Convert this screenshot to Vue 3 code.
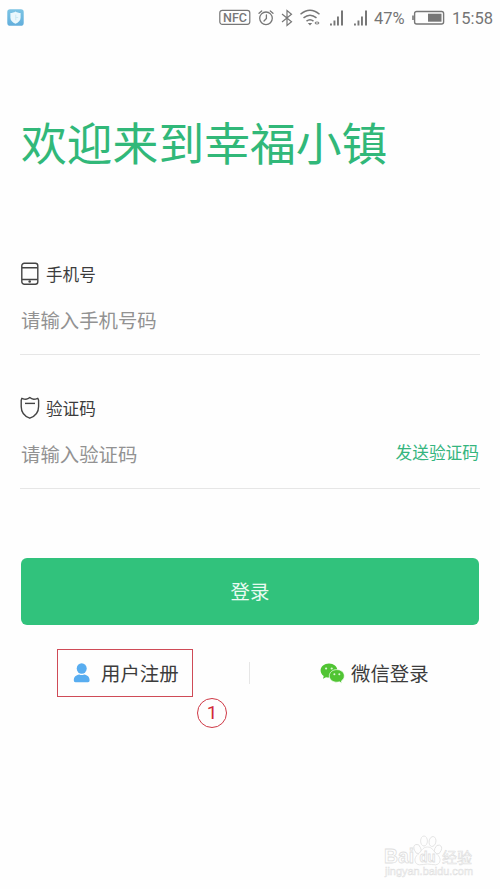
<script setup>
const fields = [
  { id: 'phone', label: '手机号', hint: '请输入手机号码' },
  { id: 'code', label: '验证码', hint: '请输入验证码', action: '发送验证码' },
]
</script>

<template>
  <div class="screen">
    <header class="status">
      <svg class="guard" width="17" height="17" viewBox="0 0 18 18">
        <defs>
          <linearGradient id="guardFill" x1="0" y1="0" x2="0" y2="1">
            <stop offset="0" stop-color="#7cc4e4" />
            <stop offset="1" stop-color="#62aedc" />
          </linearGradient>
        </defs>
        <rect x=".3" y=".3" width="17.4" height="17.4" rx="3" fill="url(#guardFill)" />
        <path d="M9 2.600c1.700 1.100 3.400 1.500 5.400 1.600v5.100c0 3-2.300 5.100-5.400 6.300-3.100-1.200-5.400-3.300-5.400-6.300V4.200c2-.1 3.700-.5 5.400-1.600z" fill="#eaf8fd" />
        <path d="M9.300 6v6M9.300 9h2.500" stroke="#c3e4f1" stroke-width=".8" />
      </svg>
      <div class="indicators">
        <svg width="32" height="17" viewBox="0 0 32 17">
          <rect x=".8" y="1.300" width="30" height="14" rx="2.500" fill="none" stroke="#777" stroke-width="1.200" />
          <text x="4" y="12.700" textLength="24" lengthAdjust="spacingAndGlyphs" class="nfc">NFC</text>
        </svg>
        <svg class="alarm" width="16" height="18" viewBox="0 0 16 18" fill="none" stroke="#777" stroke-width="1.300" stroke-linecap="round">
          <circle cx="8" cy="9.300" r="6.300" />
          <path d="M8.400 5.800V9.500L6 12M1 4.300 3.700 2M15 4.300 12.300 2" />
        </svg>
        <svg class="bluetooth" width="12" height="18" viewBox="0 0 12 18" fill="none" stroke="#777" stroke-width="1.200">
          <path d="M1 5 10.500 12.800 6 16.500V1.500L10.500 5.200 1 13" />
        </svg>
        <svg class="wifi" width="21" height="18" viewBox="0 0 21 18" fill="none" stroke="#777" stroke-width="1.500">
          <path d="M.5 5.300q9.500-8 19 0M3.500 8.900q6.500-5.400 13 0M6.500 12.200q3.500-2.800 7 0" />
          <path d="M7.800 14h4.400L10 16.500z" fill="#777" stroke="none" />
          <path d="M16.500 12v4l-2-2zM17.500 12v4l2-2z" fill="#777" stroke="none" />
        </svg>
        <svg v-for="n in 2" :key="n" class="signal" width="15" height="18" viewBox="0 0 15 18" fill="#777">
          <path d="M0 14.500h1.900v2H0zM3.500 11.500h1.900v5H3.500zM7 7.500h1.900v9H7zM11 1.500h2v15H11z" />
        </svg>
        <span class="percent">47%</span>
        <svg class="battery" width="33" height="16" viewBox="0 0 33 16">
          <rect x="2.600" y="1.500" width="29" height="12.500" rx="2" fill="none" stroke="#777" stroke-width="1.400" />
          <path d="M.2 5.500h1.600v4.500H.2z" fill="#777" />
          <path d="M16 3.700h13.500v8H16z" fill="#777" />
        </svg>
        <span class="time">15:58</span>
      </div>
    </header>

    <main class="content">
      <h1 class="title">欢迎来到幸福小镇</h1>

      <section v-for="field in fields" :key="field.id" class="field">
        <div class="label">
          <svg v-if="field.id === 'phone'" width="20" height="24" viewBox="0 0 20 24" fill="none" stroke="#444" stroke-width="1.400">
            <rect x="1.800" y="1.300" width="16" height="21" rx="2.500" />
            <path d="M2 5.700h15.500M2 17.500h15.500" />
            <circle cx="9.700" cy="19.500" r="1.300" fill="#444" stroke="none" />
          </svg>
          <svg v-else width="20" height="24" viewBox="0 0 20 24" fill="none" stroke="#444" stroke-width="1.400" stroke-linejoin="round">
            <path d="M9.800 1.600C8.400 2.900 7.300 3.200 6 3.200 4.500 3.200 3.200 2.800 1.900 2.300L1.200 4.200V10.500C1.200 16 4.500 20.300 9.800 22.200 15.100 20.300 18.600 16 18.600 10.500V4.200L17.800 2.300C16.500 2.800 15.200 3.200 13.700 3.200 12.400 3.200 11.200 2.900 9.800 1.600z" />
            <path d="M5 7.400h10" />
          </svg>
          <span>{{ field.label }}</span>
        </div>
        <div class="entry">
          <span class="hint">{{ field.hint }}</span>
          <span v-if="field.action" class="send">{{ field.action }}</span>
        </div>
      </section>

      <button class="login" type="button">登录</button>

      <nav class="options">
        <div class="option register">
          <svg width="18" height="20" viewBox="0 0 18 20" fill="#58adf0">
            <ellipse cx="8.700" cy="5.500" rx="5" ry="5.200" />
            <path d="M.8 17.300C.8 13.800 3 12.200 6.200 11.600q2.500 1 5 0c3.200.6 5.400 2.200 5.400 5.700 0 1.300-.6 1.900-1.600 1.900H2.400c-1 0-1.600-.6-1.600-1.900z" />
          </svg>
          <span>用户注册</span>
          <b class="marker">1</b>
        </div>
        <i class="divider"></i>
        <div class="option wechat">
          <svg width="25" height="21" viewBox="0 0 25 21">
            <path d="M9 .6C4.300.6.6 3.700.6 7.600c0 2.200 1.200 4.200 3.100 5.500l-.7 2.700 3-1.600c1 .3 2 .4 3 .4 4.700 0 8.400-3.100 8.400-7S13.700.6 9 .6z" fill="#50c433" />
            <path d="M16.800 6.600c-4.200 0-7.500 2.800-7.500 6.300s3.300 6.300 7.500 6.300c.9 0 1.800-.1 2.600-.4l2.600 1.400-.6-2.300c1.700-1.100 2.900-2.900 2.900-5 0-3.500-3.300-6.300-7.500-6.300z" fill="#50c433" stroke="#fff" stroke-width=".7" />
            <g fill="#dff5d8">
              <circle cx="6.100" cy="5.500" r="1.100" />
              <circle cx="11.700" cy="5.500" r="1.100" />
              <circle cx="14.400" cy="11.300" r="1" />
              <circle cx="19.300" cy="11.300" r="1" />
            </g>
          </svg>
          <span>微信登录</span>
        </div>
      </nav>
    </main>

    <svg class="watermark" width="96" height="50" viewBox="0 0 96 50">
      <g fill="#fefefe" stroke="#dfdfdf" stroke-width=".8">
        <ellipse cx="36.500" cy="15" rx="3.300" ry="4.800" transform="rotate(-20 36.500 15)" />
        <ellipse cx="43" cy="7" rx="3.400" ry="5" />
        <ellipse cx="51.500" cy="7.500" rx="3.400" ry="5" transform="rotate(10 51.500 7.500)" />
        <ellipse cx="57" cy="15.500" rx="3.300" ry="4.600" transform="rotate(20 57 15.500)" />
        <path d="M46.500 13c5 0 6 4.500 9.500 7.300 5 4 3.500 10.200-1.500 10.500-3 .2-5-.8-8-.8s-5 1-8 .8c-5-.3-6.500-6.500-1.500-10.500 3.500-2.800 4.500-7.300 9.500-7.300z" />
        <text x="3" y="29" textLength="30" lengthAdjust="spacingAndGlyphs" class="brand">Bai</text>
        <text x="38.500" y="28" textLength="16" lengthAdjust="spacingAndGlyphs" class="paw">du</text>
        <text x="61" y="28.500" textLength="30" class="suffix">经验</text>
        <text x="4" y="41" textLength="88" lengthAdjust="spacingAndGlyphs" class="address">jingyan.baidu.com</text>
      </g>
    </svg>
  </div>
</template>

<style>
body {
  margin: 0;
  background: #fefefe;
}
</style>

<style scoped>
.screen {
  position: relative;
  box-sizing: border-box;
  width: 500px;
  height: 889px;
  overflow: hidden;
  background: #fefefe;
  color: #3c3c3c;
  font-family: "Noto Sans CJK SC", sans-serif;
}
.status {
  display: flex;
  justify-content: space-between;
  align-items: center;
  box-sizing: border-box;
  height: 35px;
  padding: 0 7px;
  color: #757575;
  font: 17px/20px Roboto, sans-serif;
}
.guard { margin-bottom: 1px; }
.indicators {
  display: flex;
  align-items: center;
}
.nfc {
  fill: #777;
  font: 500 12px Roboto, sans-serif;
}
.alarm { margin-left: 7px; }
.bluetooth { margin-left: 7px; }
.wifi { margin-left: 7px; }
.signal { margin-left: 9px; }
.percent {
  width: 31px;
  margin-left: 5px;
  padding-top: 2px;
  font-size: 16.500px;
}
.battery { margin-left: 7px; }
.time {
  width: 41px;
  margin-left: 7px;
  padding-top: 2px;
  white-space: nowrap;
  font-size: 16.500px;
}
.content {
  padding: 71px 20px 0;
}
.title {
  height: 70px;
  margin: 0 0 81px 1px;
  color: #31b879;
  font-weight: 400;
  font-size: 45.800px;
  line-height: 70px;
  white-space: nowrap;
}
.field {
  box-sizing: border-box;
  height: 98px;
  margin-bottom: 36px;
  border-bottom: 1px solid #e6e6e6;
}
.label {
  display: flex;
  align-items: center;
  gap: 6px;
  height: 34px;
  font-size: 16.600px;
  line-height: 34px;
}
.entry {
  display: flex;
  justify-content: space-between;
  align-items: center;
  height: 57px;
  padding-left: 1px;
}
.hint {
  color: #929292;
  font-size: 19.400px;
}
.send {
  padding: 0 1px 3px 0;
  color: #35b57e;
  font-size: 16.700px;
}
.login {
  display: block;
  width: 458px;
  height: 67px;
  margin: 69px 0 0 1px;
  padding: 0 0 2px;
  border: 0;
  border-radius: 6px;
  background: #31c27c;
  color: #e9fbf2;
  font: 19.400px/65px "Noto Sans CJK SC", sans-serif;
}
.options {
  display: flex;
  align-items: center;
  height: 48px;
  margin-top: 24px;
  padding-left: 37px;
  font-size: 19.400px;
}
.option {
  display: flex;
  align-items: center;
  white-space: nowrap;
}
.option span {
  padding-bottom: 2px;
}
.register {
  position: relative;
  box-sizing: border-box;
  width: 136px;
  height: 48px;
  padding-left: 15px;
  gap: 10px;
  border: 1px solid #cf4b57;
}
.marker {
  position: absolute;
  left: 139px;
  top: 48px;
  box-sizing: border-box;
  width: 30px;
  height: 30px;
  border: 1px solid #cf3946;
  border-radius: 50%;
  color: #d12a38;
  font: 19px/28px Roboto, sans-serif;
  text-align: center;
}
.divider {
  width: 1px;
  height: 22px;
  margin-left: 56px;
  background: #e6e6e6;
}
.wechat {
  margin-left: 70px;
  gap: 6px;
}
.watermark {
  position: absolute;
  left: 381px;
  top: 834px;
}
.brand { font: bold 20px "Liberation Sans", sans-serif; }
.paw { font: bold 14px "Liberation Sans", sans-serif; }
.suffix { font: 400 15px "Noto Sans CJK SC", sans-serif; stroke-width: .6px; }
.address { font: 10.500px "Liberation Sans", sans-serif; stroke-width: .5px; }
</style>
